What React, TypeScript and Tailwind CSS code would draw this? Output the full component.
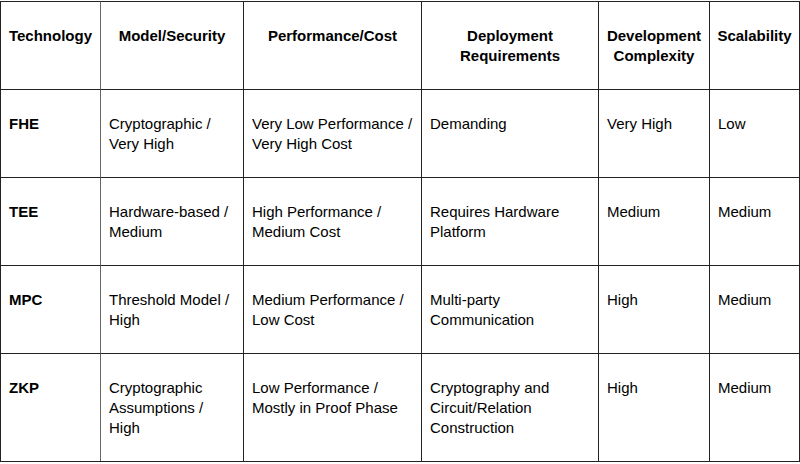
import React from "react"

type Row = {
  tech: string
  cells: string[][]
}

const headers: string[][] = [
  ["Technology"],
  ["Model/Security"],
  ["Performance/Cost"],
  ["Deployment", "Requirements"],
  ["Development", "Complexity"],
  ["Scalability"],
]

const rows: Row[] = [
  {
    tech: "FHE",
    cells: [
      ["Cryptographic /", "Very High"],
      ["Very Low Performance /", "Very High Cost"],
      ["Demanding"],
      ["Very High"],
      ["Low"],
    ],
  },
  {
    tech: "TEE",
    cells: [
      ["Hardware-based /", "Medium"],
      ["High Performance /", "Medium Cost"],
      ["Requires Hardware", "Platform"],
      ["Medium"],
      ["Medium"],
    ],
  },
  {
    tech: "MPC",
    cells: [
      ["Threshold Model /", "High"],
      ["Medium Performance /", "Low Cost"],
      ["Multi-party", "Communication"],
      ["High"],
      ["Medium"],
    ],
  },
  {
    tech: "ZKP",
    cells: [
      ["Cryptographic", "Assumptions /", "High"],
      ["Low Performance /", "Mostly in Proof Phase"],
      ["Cryptography and", "Circuit/Relation", "Construction"],
      ["High"],
      ["Medium"],
    ],
  },
]

function Lines({ lines }: { lines: string[] }) {
  return (
    <>
      {lines.map((l, i) => (
        <div key={i}>{l}</div>
      ))}
    </>
  )
}

export default function App() {
  return (
    <div className="w-[800px] h-[464px] bg-white pt-px font-['Liberation_Sans',Arial,sans-serif] text-[15px] leading-5 text-black">
      <div className="grid grid-cols-[100px_143px_178px_177px_111px_90px] grid-rows-[88px_88px_88px_88px_108px] border-r border-b border-[#222] w-[800px]">
        {headers.map((h, i) => (
          <div
            key={i}
            className={`border-t border-l border-[#222] pt-[24px] px-1 text-center font-bold ${i === 1 ? "border-l-[#666]" : ""}`}
          >
            <Lines lines={h} />
          </div>
        ))}
        {rows.map((r) => (
          <React.Fragment key={r.tech}>
            <div className="border-t border-l border-[#222] pt-[24px] pl-2 font-bold">{r.tech}</div>
            {r.cells.map((c, i) => (
              <div
                key={i}
                className={`border-t border-l border-[#222] pt-[24px] pl-2 ${i === 0 ? "border-l-[#666]" : ""}`}
              >
                <Lines lines={c} />
              </div>
            ))}
          </React.Fragment>
        ))}
      </div>
    </div>
  )
}
